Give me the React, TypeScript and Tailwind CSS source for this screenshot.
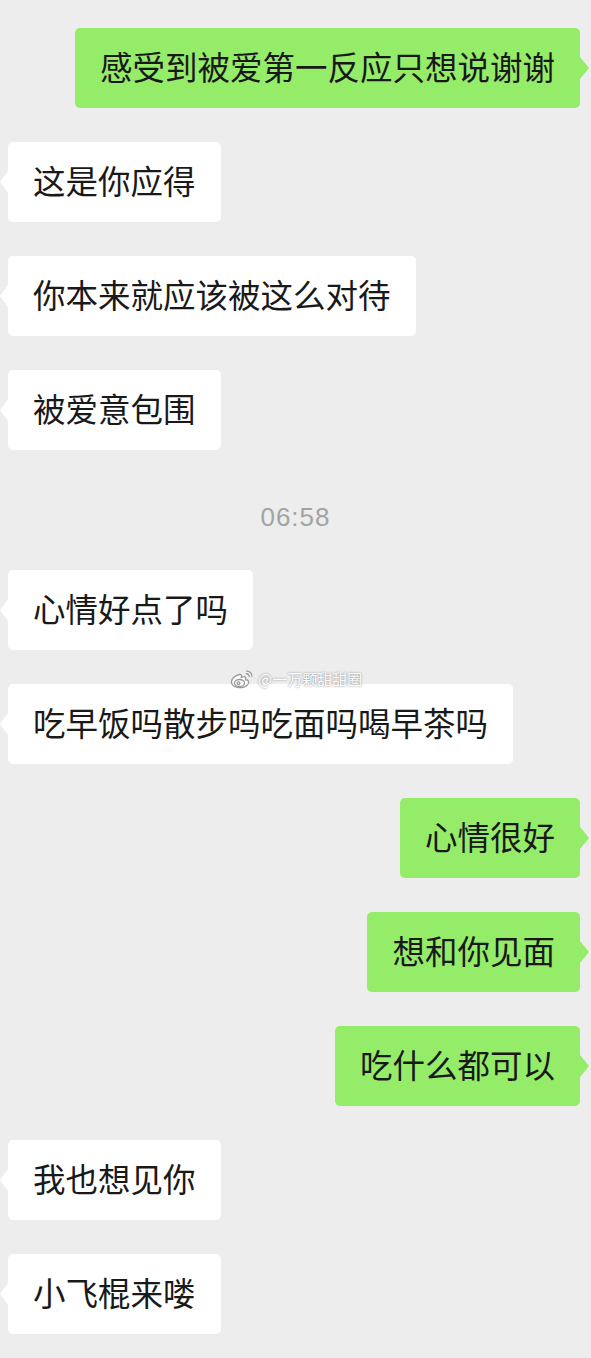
type Msg =
  | { kind: 'me' | 'them'; text: string }
  | { kind: 'time'; text: string }

const messages: Msg[] = [
  { kind: 'me', text: '感受到被爱第一反应只想说谢谢' },
  { kind: 'them', text: '这是你应得' },
  { kind: 'them', text: '你本来就应该被这么对待' },
  { kind: 'them', text: '被爱意包围' },
  { kind: 'time', text: '06:58' },
  { kind: 'them', text: '心情好点了吗' },
  { kind: 'them', text: '吃早饭吗散步吗吃面吗喝早茶吗' },
  { kind: 'me', text: '心情很好' },
  { kind: 'me', text: '想和你见面' },
  { kind: 'me', text: '吃什么都可以' },
  { kind: 'them', text: '我也想见你' },
  { kind: 'them', text: '小飞棍来喽' },
]

const font = "font-['Noto_Sans_CJK_SC','Noto_Sans',sans-serif]"

const Bubble = ({ mine, text }: { mine: boolean; text: string }) => (
  <div className={`flex mb-[34px] ${mine ? 'justify-end pr-[11px]' : 'justify-start pl-[8px]'}`}>
    <div
      className={`relative rounded-[5px] px-[25px] pt-[18px] pb-[22px] text-[32.5px] leading-[40px] text-[#191919] whitespace-nowrap ${
        mine ? 'bg-[#95ec69]' : 'bg-white'
      }`}
    >
      {text}
      {mine ? (
        <span className="absolute top-1/2 -translate-y-1/2 -right-[9px] w-0 h-0 border-y-[11px] border-y-transparent border-l-[9px] border-l-[#95ec69]" />
      ) : (
        <span className="absolute top-1/2 -translate-y-1/2 -left-[8px] w-0 h-0 border-y-[11px] border-y-transparent border-r-[8px] border-r-white" />
      )}
    </div>
  </div>
)

const WeiboMark = () => (
  <div className="absolute left-[229px] top-[668px] flex items-center gap-[3px] pointer-events-none">
    <svg width="26" height="22" viewBox="0 0 26 22" fill="none" stroke="#9a9a9a" strokeWidth="1.3">
      <path d="M10.5 6.5C6 7.5 2 11 2.5 14.5 3 18.5 8 20 12.5 19.5 17.5 19 20.5 16 19.5 13.3 19 12 17.5 11.7 16.5 11.8 17.3 9.5 16.5 8.3 14 8.8L12.3 9.3C12.8 7 12.3 6.2 10.5 6.5Z" fill="#ffffff" />
      <ellipse cx="10.5" cy="15" rx="5" ry="3.5" />
      <circle cx="9.5" cy="15.3" r="1.4" />
      <path d="M17 3.2C20.5 2.6 23.5 5.5 22.8 9" />
      <path d="M16.8 5.8C18.8 5.4 20.5 7 20.1 9" />
    </svg>
    <span className={`${font} text-[15px] leading-[20px] text-white [text-shadow:0_0_2px_rgba(0,0,0,0.5)]`}>
      @一万颗甜甜圈
    </span>
  </div>
)

export default function App() {
  return (
    <div className={`relative w-full min-h-[1358px] bg-[#ededed] pt-[28px] overflow-hidden ${font}`}>
      {messages.map((m, i) =>
        m.kind === 'time' ? (
          <div key={i} className="h-[86px] pt-[17px] text-center">
            <span className="font-['Liberation_Sans',sans-serif] text-[26px] leading-[32px] tracking-[1px] text-[#a3a3a3]">
              {m.text}
            </span>
          </div>
        ) : (
          <Bubble key={i} mine={m.kind === 'me'} text={m.text} />
        )
      )}
      <WeiboMark />
    </div>
  )
}
